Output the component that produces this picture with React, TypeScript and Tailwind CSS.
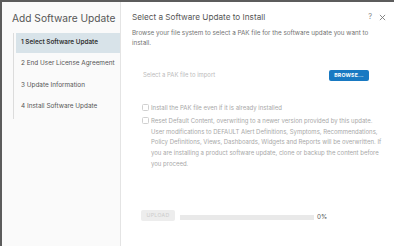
import React from "react";

const steps = [
  "1 Select Software Update",
  "2 End User License Agreement",
  "3 Update Information",
  "4 Install Software Update",
];

const resetLines = [
  "Reset Default Content, overwriting to a newer version provided by this update.",
  "User modifications to DEFAULT Alert Definitions, Symptoms, Recommendations,",
  "Policy Definitions, Views, Dashboards, Widgets and Reports will be overwritten. If",
  "you are installing a product software update, clone or backup the content before",
  "you proceed.",
];

export default function App() {
  return (
    <div
      className="w-[394px] h-[246px] overflow-hidden bg-white flex border-t-2 border-l-2 border-[#5c5c5c]"
      style={{ fontFamily: "Inter, 'Noto Sans', sans-serif" }}
    >
      {/* left nav */}
      <div className="w-[119px] shrink-0 bg-[#fafafa] border-r border-[#e4e4e4] flex flex-col">
        <div className="pl-[10px] pt-[9px] text-[10.2px] leading-[14px] text-[#565656] whitespace-nowrap">
          Add Software Update
        </div>
        <div className="ml-[11px] mt-[8px] border-l border-[#dcdcdc] flex flex-col h-[86px] pl-[2px]">
          {steps.map((s, i) => (
            <div
              key={s}
              className={
                "h-[20px] mb-[2px] pl-[5px] flex items-center text-[6.4px] whitespace-nowrap " +
                (i === 0 ? "bg-[#d8e3e9] text-[#333] font-semibold" : "text-[#565656]")
              }
            >
              {s}
            </div>
          ))}
        </div>
      </div>

      {/* right content */}
      <div className="flex-1 flex flex-col pl-[11px] pr-[8px]">
        <div className="flex items-center justify-between h-[20px] mt-[5px]">
          <div className="text-[8.2px] text-[#565656]">Select a Software Update to Install</div>
          <div className="flex items-center gap-[7px] text-[#888]">
            <span className="text-[7.5px]">?</span>
            <svg width="7" height="7" viewBox="0 0 8 8" stroke="#777" strokeWidth="1">
              <path d="M1 1 L7 7 M7 1 L1 7" />
            </svg>
          </div>
        </div>
        <p className="text-[6.3px] leading-[10px] text-[#737373] pr-[10px] mt-[1px]">
          Browse your file system to select a PAK file for the software update you want to install.
        </p>

        <div className="flex items-center justify-between mt-[22px] pl-[11px] pr-[17px]">
          <span className="text-[5.9px] text-[#bbbbbb]">Select a PAK file to import</span>
          <button className="w-[40px] h-[11px] rounded-[2px] bg-[#1879c2] text-white text-[5.2px] font-bold tracking-[0.2px] flex items-center justify-center">
            BROWSE...
          </button>
        </div>

        <div className="mt-[22px] pl-[10px] flex flex-col gap-[3px]">
          <label className="flex items-start gap-[2px]">
            <span className="w-[7px] h-[7px] mt-[1px] shrink-0 border border-[#d0d0d0] rounded-[1.5px] bg-white" />
            <span className="text-[6px] leading-[10px] text-[#a8a8a8] whitespace-nowrap">
              Install the PAK file even if it is already installed
            </span>
          </label>
          <label className="flex items-start gap-[2px]">
            <span className="w-[7px] h-[7px] mt-[1px] shrink-0 border border-[#d0d0d0] rounded-[1.5px] bg-white" />
            <span className="flex flex-col text-[6px] leading-[10.7px] text-[#a8a8a8] whitespace-nowrap">
              {resetLines.map((l) => (
                <span key={l}>{l}</span>
              ))}
            </span>
          </label>
        </div>

        <div className="mt-auto mb-[24px] pl-[9px] flex items-center">
          <button className="w-[34px] h-[11px] rounded-[2px] bg-[#ededed] text-[#cccccc] text-[5.2px] tracking-[0.3px] flex items-center justify-center">
            UPLOAD
          </button>
          <div className="ml-[5px] w-[134px] h-[5px] mt-[4px] bg-[#e9e9e9]" />
          <span className="ml-[3px] mt-[3px] text-[6.3px] text-[#555]">0%</span>
        </div>
      </div>
    </div>
  );
}
